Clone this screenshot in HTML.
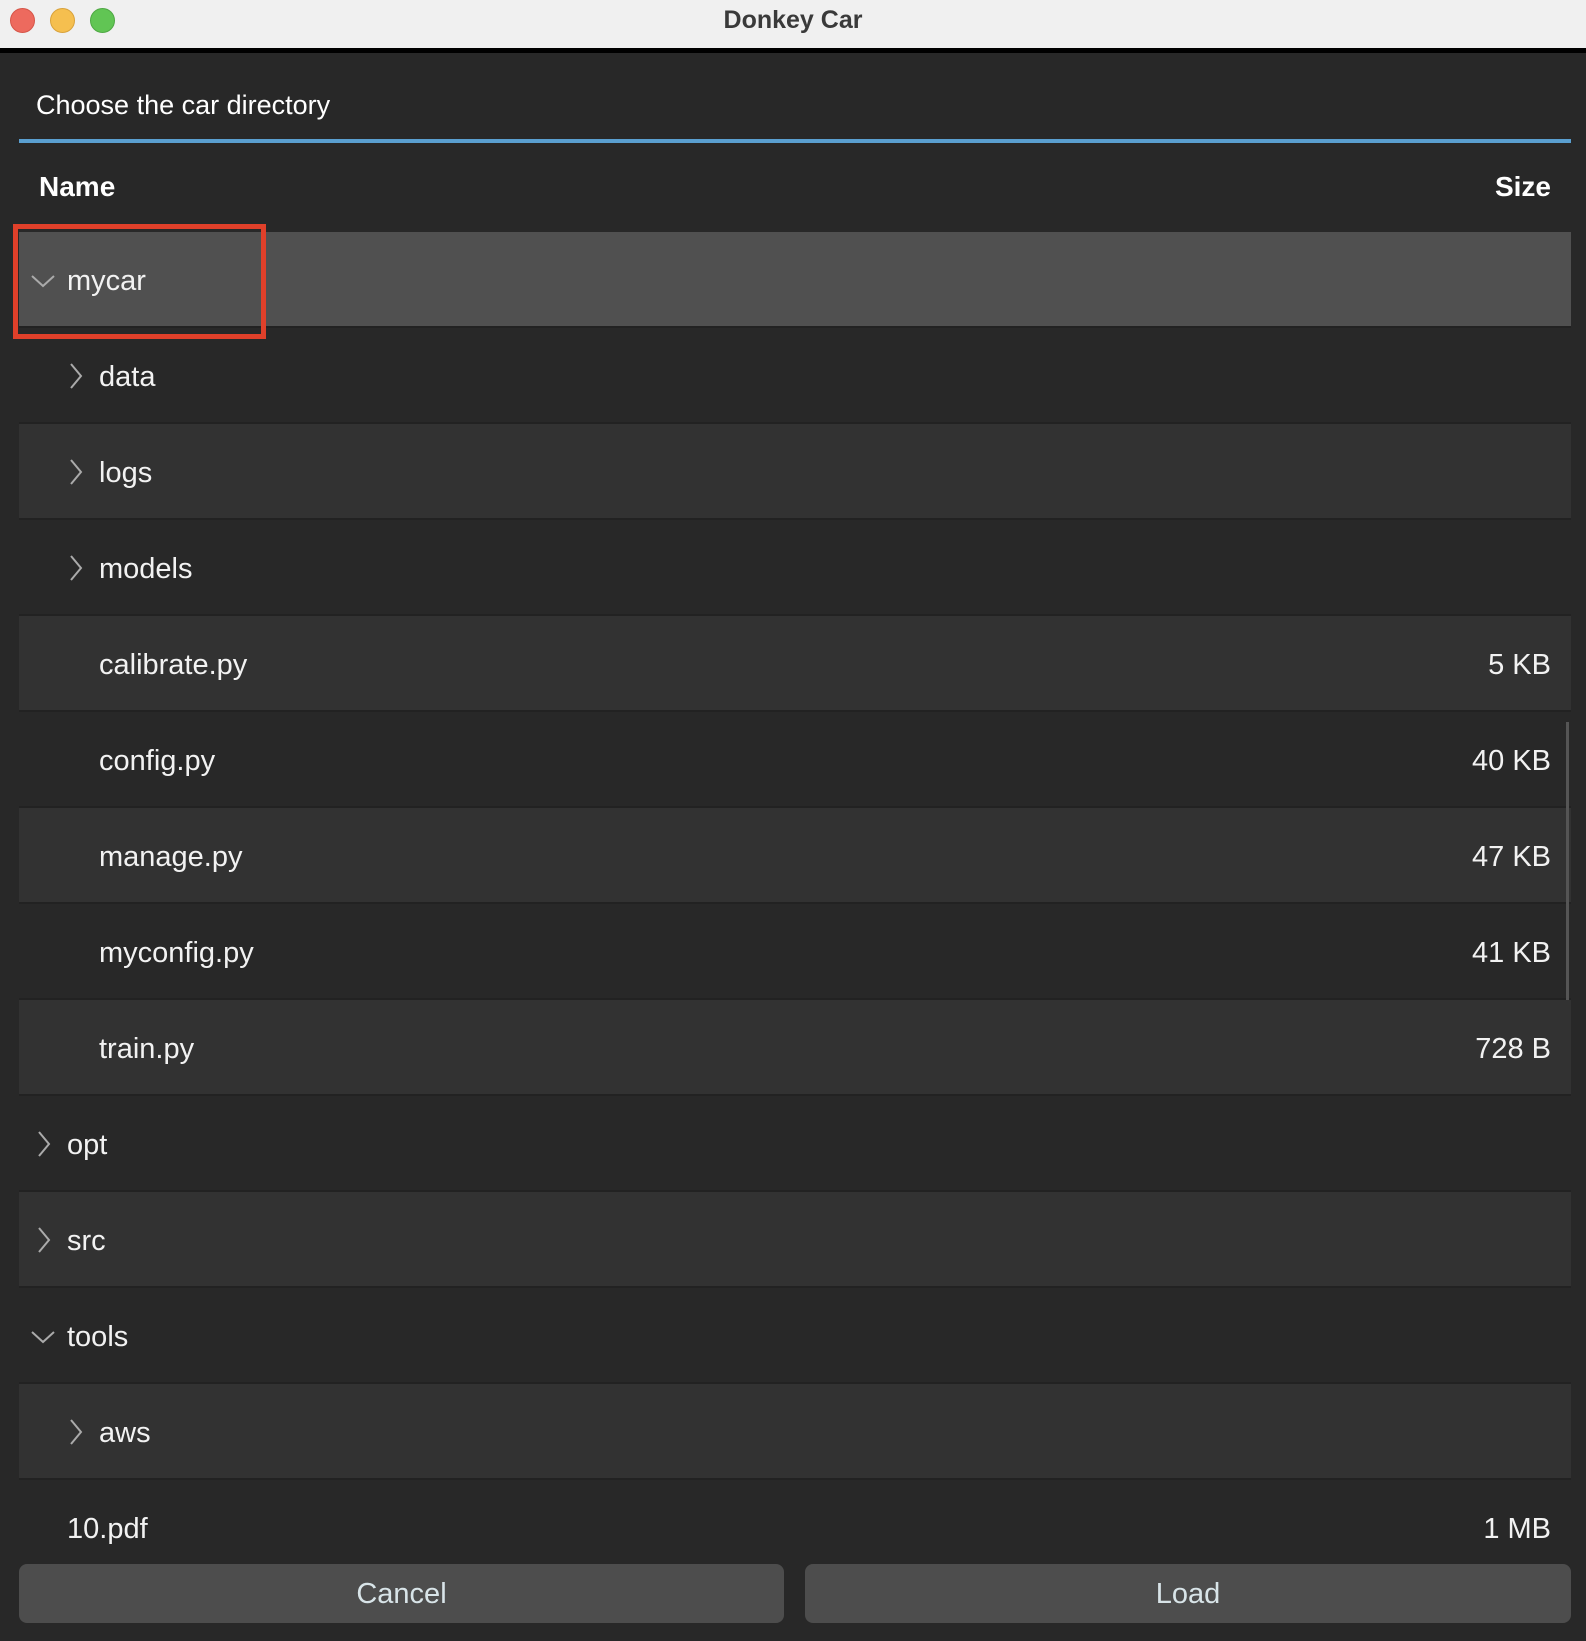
<!DOCTYPE html>
<html><head><meta charset="utf-8"><style>
*{margin:0;padding:0;box-sizing:border-box}
body{width:1586px;height:1641px;background:#282828;font-family:"Liberation Sans",sans-serif;color:#fff;position:relative;overflow:hidden}
.tb{position:absolute;left:0;top:0;width:1586px;height:48px;background:#f0f0f0;}
.tb .t{position:absolute;left:0;right:0;top:6px;text-align:center;font-weight:bold;font-size:25px;color:#3a3a3a}
.dot{position:absolute;top:8px;width:25px;height:25px;border-radius:50%}
.bl{position:absolute;left:0;top:48px;width:1586px;height:5px;background:#000}
.sub{position:absolute;left:36px;top:90px;font-size:27px;color:#fff}
.line{position:absolute;left:19px;top:139px;width:1552px;height:4px;background:#5a9fd0}
.hd{position:absolute;top:171px;font-size:28px;font-weight:bold}
.row{position:absolute;left:19px;width:1552px;height:96px;border-bottom:2px solid #222}
.row span{position:absolute;top:33px;font-size:29px;color:#f2f2f2}
.row .sz{right:20px}
.l{background:#323232}.d{background:#282828}
.row svg{position:absolute;top:35px}
.btn{position:absolute;top:1564px;height:59px;background:#4d4d4d;border-radius:8px;font-size:29px;color:#d8e4e8;text-align:center;line-height:61px}
</style></head><body>
<div class="tb"><div class="dot" style="left:10px;background:#ed6a5e;border:1px solid #d65548"></div><div class="dot" style="left:50px;background:#f5bf4f;border:1px solid #d9a23a"></div><div class="dot" style="left:90px;background:#61c554;border:1px solid #4ea843"></div><div class="t">Donkey Car</div></div>
<div class="bl"></div>
<div class="sub">Choose the car directory</div>
<div class="line"></div>
<div class="hd" style="left:39px">Name</div>
<div class="hd" style="right:35px">Size</div>

<div class="row" style="top:232px;background:#505050"><svg style="left:12px;top:42px" width="24" height="14"><path d="M1 2 L12 12 L23 2" stroke="#aaa" stroke-width="2" fill="none"/></svg><span style="left:48px">mycar</span></div>
<div class="row d" style="top:328px"><svg style="left:50px" width="14" height="26"><path d="M2 1 L12 13 L2 25" stroke="#aaa" stroke-width="2" fill="none"/></svg><span style="left:80px">data</span></div>
<div class="row l" style="top:424px"><svg style="left:50px" width="14" height="26"><path d="M2 1 L12 13 L2 25" stroke="#aaa" stroke-width="2" fill="none"/></svg><span style="left:80px">logs</span></div>
<div class="row d" style="top:520px"><svg style="left:50px" width="14" height="26"><path d="M2 1 L12 13 L2 25" stroke="#aaa" stroke-width="2" fill="none"/></svg><span style="left:80px">models</span></div>
<div class="row l" style="top:616px"><span style="left:80px">calibrate.py</span><span class="sz">5 KB</span></div>
<div class="row d" style="top:712px"><span style="left:80px">config.py</span><span class="sz">40 KB</span></div>
<div class="row l" style="top:808px"><span style="left:80px">manage.py</span><span class="sz">47 KB</span></div>
<div class="row d" style="top:904px"><span style="left:80px">myconfig.py</span><span class="sz">41 KB</span></div>
<div class="row l" style="top:1000px"><span style="left:80px">train.py</span><span class="sz">728 B</span></div>
<div class="row d" style="top:1096px"><svg style="left:18px" width="14" height="26"><path d="M2 1 L12 13 L2 25" stroke="#aaa" stroke-width="2" fill="none"/></svg><span style="left:48px">opt</span></div>
<div class="row l" style="top:1192px"><svg style="left:18px" width="14" height="26"><path d="M2 1 L12 13 L2 25" stroke="#aaa" stroke-width="2" fill="none"/></svg><span style="left:48px">src</span></div>
<div class="row d" style="top:1288px"><svg style="left:12px;top:42px" width="24" height="14"><path d="M1 2 L12 12 L23 2" stroke="#aaa" stroke-width="2" fill="none"/></svg><span style="left:48px">tools</span></div>
<div class="row l" style="top:1384px"><svg style="left:50px" width="14" height="26"><path d="M2 1 L12 13 L2 25" stroke="#aaa" stroke-width="2" fill="none"/></svg><span style="left:80px">aws</span></div>
<div class="row d" style="top:1480px;border:none"><span style="left:48px">10.pdf</span><span class="sz">1 MB</span></div>

<div style="position:absolute;left:1566px;top:722px;width:3px;height:278px;background:#555"></div>
<div style="position:absolute;left:13px;top:224px;width:253px;height:115px;border:5px solid #e0402a"></div>
<div class="btn" style="left:19px;width:765px">Cancel</div>
<div class="btn" style="left:805px;width:766px">Load</div>
</body></html>
